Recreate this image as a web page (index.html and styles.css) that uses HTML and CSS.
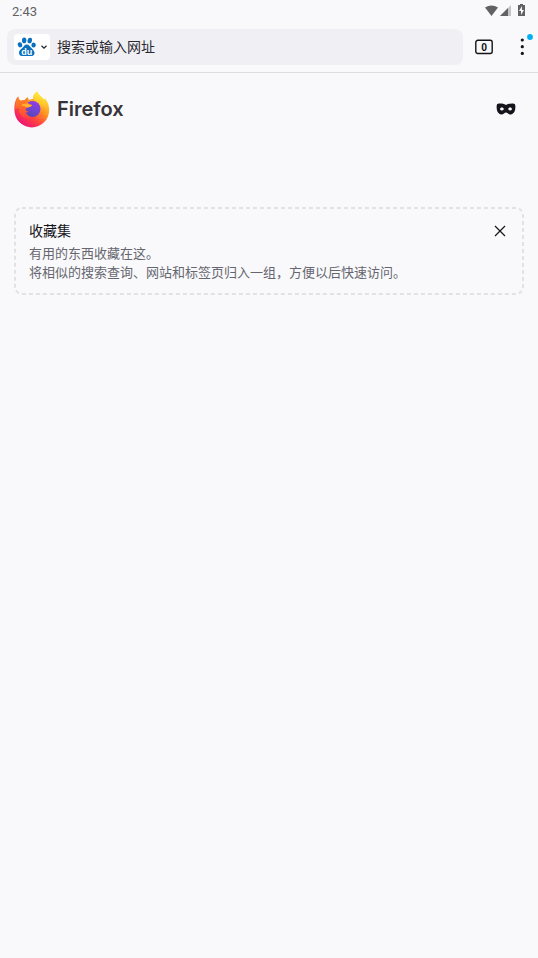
FILE: index.html
```html
<!DOCTYPE html>
<html lang="zh-CN">
<head>
<meta charset="utf-8">
<meta name="viewport" content="width=device-width, initial-scale=1">
<title>Firefox</title>
<link rel="stylesheet" href="styles.css">
</head>
<body>
<div class="status">
  <span class="clock">2:43</span>
  <svg class="signals" viewBox="0 0 42 14" aria-hidden="true">
    <path d="M1 3.5Q7.500-.5 14 3.500L7.500 12Z" fill="#626264"/>
    <path d="M27 1V12H16Z" fill="#c4c4c6"/>
    <path d="M24 4V12H16Z" fill="#626264"/>
    <path d="M36 0h3v1h2v11h-7V1h2Z" fill="#626264"/>
    <path d="M38 2L35 7h2v4l3-5h-2Z" fill="#f9f9fb"/>
  </svg>
</div>
<header class="toolbar">
  <div class="search">
    <button class="engine" aria-label="百度">
      <svg class="paw" viewBox="0 0 20 20" aria-hidden="true">
        <g fill="#0870bd">
          <ellipse cx="7.2" cy="3.4" rx="2.2" ry="2.8"/>
          <ellipse cx="12.8" cy="3.6" rx="2.2" ry="2.8" transform="rotate(12 12.8 3.6)"/>
          <ellipse cx="3" cy="7.8" rx="2.2" ry="2.6" transform="rotate(-15 3 7.8)"/>
          <ellipse cx="16.6" cy="8" rx="2.2" ry="2.6"/>
          <path d="M9.8 7.6C7.3 7.6 7 9.8 5 11.2C2.3 13 1.6 15 2.2 17C3.2 19.8 6.2 19 9.8 19C13.4 19 16.4 19.8 17.4 17C18 14.8 16.4 12.8 14.6 11.2C12.5 9.4 12.3 7.6 9.8 7.6Z"/>
        </g>
        <text class="du" x="9.8" y="17.6" text-anchor="middle">du</text>
      </svg>
      <svg class="chevron" viewBox="0 0 8 8" aria-hidden="true"><path d="M1.5 2.8L4 5.2L6.5 2.8" fill="none" stroke="#242329" stroke-width="1.2"/></svg>
    </button>
    <input class="address" type="text" aria-label="搜索或输入网址" placeholder="搜索或输入网址">
  </div>
  <button class="tabs" aria-label="标签页">
    <svg class="tab-box" viewBox="0 0 18 16" aria-hidden="true">
      <rect x=".8" y="1.3" width="16.4" height="13.2" rx="2" fill="none" stroke="#15141a" stroke-width="1.4"/>
      <text class="count" x="9" y="11.5" text-anchor="middle">0</text>
    </svg>
  </button>
  <button class="menu" aria-label="菜单">
    <svg class="dots" viewBox="0 0 18 24" aria-hidden="true">
      <g fill="#15141a"><circle cx="7.300" cy="6" r="1.6"/><circle cx="7.300" cy="12.7" r="1.6"/><circle cx="7.300" cy="19.4" r="1.6"/></g>
      <circle cx="15" cy="3" r="2.9" fill="#00b0f4"/>
    </svg>
  </button>
</header>
<main class="home">
  <div class="brand">
    <svg class="logo" viewBox="0 0 36 38" aria-hidden="true">
      <defs>
        <linearGradient id="body" x1=".85" y1=".1" x2=".2" y2=".95"><stop offset="0" stop-color="#ffe141"/><stop offset=".35" stop-color="#ff9a20"/><stop offset=".65" stop-color="#ff453f"/><stop offset="1" stop-color="#ee0f79"/></linearGradient>
        <linearGradient id="flame" x1=".6" y1="0" x2=".4" y2="1"><stop offset="0" stop-color="#fff44a"/><stop offset=".5" stop-color="#ffc526"/><stop offset="1" stop-color="#ff5735" stop-opacity="0"/></linearGradient>
        <linearGradient id="globe" x1=".8" y1="0" x2=".3" y2="1"><stop offset="0" stop-color="#963ce8"/><stop offset=".5" stop-color="#7045d4"/><stop offset="1" stop-color="#5546b5"/></linearGradient>
        <linearGradient id="head" x1="0" y1="0" x2="0" y2="1"><stop offset="0" stop-color="#ff8a24"/><stop offset=".45" stop-color="#ff6a2c"/><stop offset="1" stop-color="#ff433e"/></linearGradient>
      </defs>
      <path d="M4.200 6.500C4.400 8 5 9.500 6.300 10.700Q8 10 10.500 10.200Q12 8 14 7.200L14.800 10C17 8.800 18.500 9.500 19.500 8.500C18.800 5 21.500 2.500 23.400 1.500C24 5 28.500 6.500 30 10L31 8.500C34 12 35.200 16 35.200 20A17.400 17.400 0 0 1 .4 20C.3 14 1.500 9 4.200 6.500Z" fill="url(#body)"/>
      <path d="M23.400 1.500C18.500 4.500 18 8.500 22 11.500C27 14 28.500 21 24 26C30 25 35 18 31 8.500L30 10C28 6.500 24 5 23.400 1.500Z" fill="url(#flame)"/>
      <circle cx="18.500" cy="19" r="8" fill="url(#globe)"/>
      <path d="M4.200 6.500C4.400 8 5 9.500 6.300 10.700Q8 10 10.500 10.200Q12 8 14 7.200Q13.300 9.500 13.500 12Q14.500 14.500 18.300 14.900Q17 17 13.500 17.500Q11.500 18 11.500 20Q13 21.500 15 21.800Q13 23 11.500 22Q14 28 21 27.500C11 31 4 25 5.200 18L1.200 19C1.200 13 2 9 4.200 6.500Z" fill="url(#head)"/>
      <path d="M7 15.500Q9 13 13.500 13.500Q15 15 18.300 14.900Q17 17 13.500 17.500Q10 16 7 15.500Z" fill="#ffb02c"/>
    </svg>
    <h1 class="wordmark">Firefox</h1>
    <button class="private" aria-label="隐私浏览">
      <svg class="mask" viewBox="0 0 20 12" aria-hidden="true"><path fill="#15141a" fill-rule="evenodd" d="M10 2C7.500.4 3.800.2 2 .7Q.8 1 .7 2.500C.2 7.500 2 11.400 5.300 11.400C7.700 11.400 8.600 9.400 10 9.400S12.300 11.400 14.700 11.400C18 11.400 19.800 7.500 19.300 2.500Q19.200 1 18 .7C16.200.2 12.500.4 10 2ZM3.800 6Q5.900 2.400 8 6Q5.900 9 3.800 6ZM12 6Q14.100 2.400 16.200 6Q14.100 9 12 6Z"/></svg>
    </button>
  </div>
  <section class="card">
    <svg class="outline" aria-hidden="true"><rect class="dash" x="1" y="1" rx="7"/></svg>
    <div class="card-head">
      <h2 class="title">收藏集</h2>
      <button class="close" aria-label="关闭">
        <svg class="cross" viewBox="0 0 12 12" aria-hidden="true"><path d="M1 1L11 11M11 1L1 11" stroke="#15141a" stroke-width="1.2"/></svg>
      </button>
    </div>
    <p class="text">有用的东西收藏在这。<br>将相似的搜索查询、网站和标签页归入一组，方便以后快速访问。</p>
  </section>
</main>
</body>
</html>
```
FILE: styles.css
```css
* { box-sizing: border-box; }
body {
  margin: 0;
  background: #f9f9fb;
  color: #15141a;
  font-family: Roboto, "Noto Sans CJK SC", sans-serif;
  font-size: 14px;
}
button {
  display: flex;
  align-items: center;
  justify-content: center;
  padding: 0;
  border: 0;
  background: none;
  color: inherit;
  font: inherit;
}
svg { display: block; }
.status {
  display: flex;
  align-items: center;
  justify-content: space-between;
  height: 22px;
  padding: 0 12px;
}
.clock { color: #626264; font-size: 13px; }
.signals { width: 42px; height: 14px; }
.toolbar {
  display: flex;
  align-items: center;
  height: 51px;
  padding: 0 5px 0 7px;
  border-bottom: 1px solid #dedee2;
}
.search {
  display: flex;
  flex: 1;
  align-items: center;
  gap: 7px;
  height: 36px;
  padding: 0 7px;
  border-radius: 8px;
  background: #f0f0f4;
}
.engine {
  gap: 3px;
  width: 36px;
  height: 26px;
  border-radius: 4px;
  background: #fff;
}
.paw { width: 20px; height: 20px; }
.du { fill: #fff; font-family: "Liberation Sans", sans-serif; font-size: 9px; font-weight: 700; }
.chevron { width: 8px; height: 8px; }
.address {
  flex: 1;
  min-width: 0;
  padding: 0;
  border: 0;
  outline: 0;
  background: none;
  color: inherit;
  font: inherit;
}
.address::placeholder { color: #2a2930; opacity: 1; }
.tabs { width: 42px; height: 36px; }
.tab-box { width: 18px; height: 16px; }
.count { fill: #15141a; font-size: 10px; font-weight: 700; }
.menu { width: 28px; height: 38px; justify-content: flex-end; align-items: flex-start; padding-top: 6px; }
.dots { width: 18px; height: 24px; }
.home { padding: 17px 14px; }
.brand { display: flex; align-items: center; gap: 7px; }
.logo { width: 36px; height: 38px; }
.wordmark {
  flex: 1;
  margin: 0;
  color: #363439;
  font-family: Inter, sans-serif;
  font-size: 20px;
  font-weight: 600;
  line-height: 38px;
}
.private { width: 36px; height: 38px; }
.mask { width: 20px; height: 12px; }
.card {
  position: relative;
  margin-top: 79px;
  padding: 13px 15px;
}
.outline { position: absolute; inset: 0; width: 100%; height: 100%; }
.dash {
  width: calc(100% - 2px);
  height: calc(100% - 2px);
  fill: none;
  stroke: #e2e2e6;
  stroke-width: 2px;
  stroke-dasharray: 4 3;
}
.card-head {
  position: relative;
  display: flex;
  align-items: center;
  justify-content: space-between;
}
.title { margin: 0; font-size: 14px; font-weight: 400; line-height: 22px; }
.close { width: 18px; height: 22px; }
.cross { width: 12px; height: 12px; }
.text { margin: 2px 0 0; color: #66666f; font-size: 13px; line-height: 19px; }
```
